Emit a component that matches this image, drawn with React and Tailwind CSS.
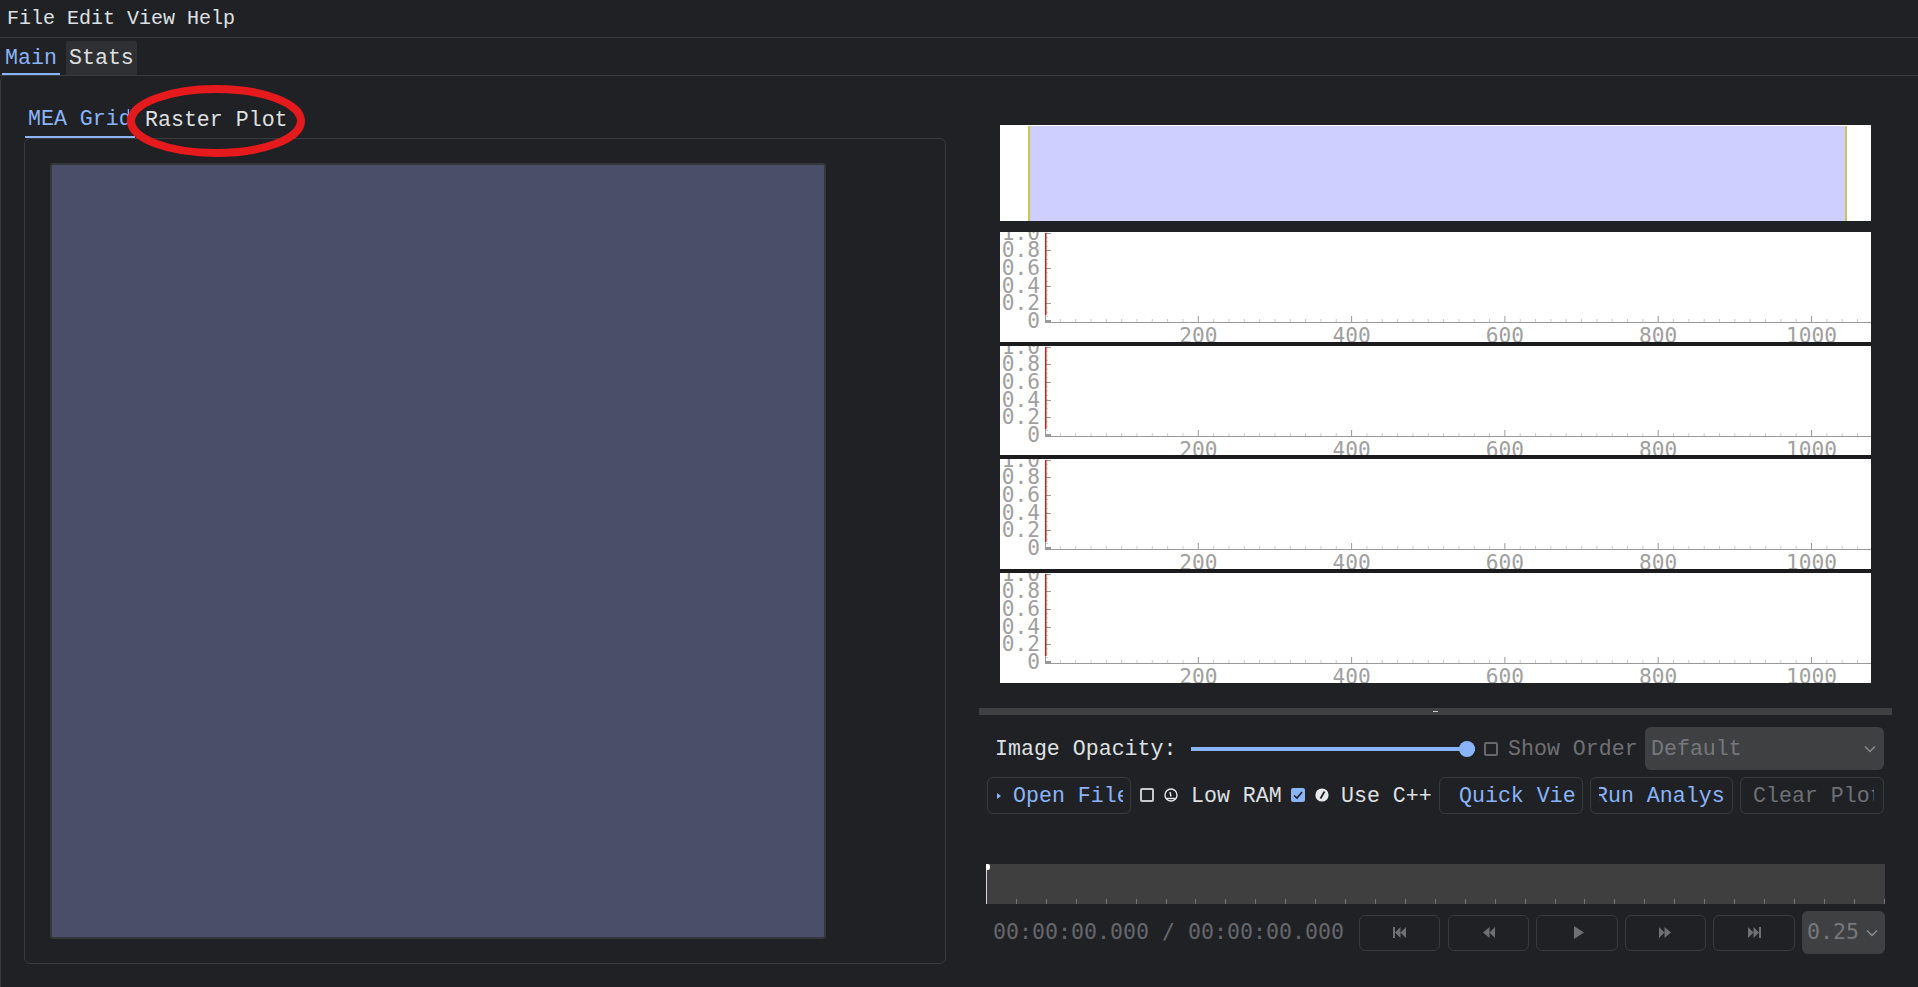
import React from 'react';

const mono = { fontFamily: '"Liberation Mono", monospace' };
const dejavu = { fontFamily: '"DejaVu Sans Mono", monospace' };
const xLabels = [200, 400, 600, 800, 1000];
const yLabels = [['1.0', 1], ['0.8', 18], ['0.6', 36], ['0.4', 54], ['0.2', 71], ['0', 89]];

const Plot = ({ h }) => {
  const minorX = [];
  for (let v = 20; v < 1080; v += 20) minorX.push(v);
  const minorY = [];
  for (let i = 0; i < 20; i++) minorY.push(1 + i * 4.4);
  return (
    <svg width="871" height={h} className="block bg-white shrink-0" style={dejavu}>
      {minorY.map((y) => (
        <line key={y} x1="45" x2="48" y1={y} y2={y} stroke="#cccccc" />
      ))}
      {yLabels.map(([t, y]) => (
        <g key={t}>
          <line x1="45" x2="51" y1={y + 0.5} y2={y + 0.5} stroke="#999999" />
          <text x="40" y={y + 7} textAnchor="end" fontSize="21.2" fill="#a0a0a0">{t}</text>
        </g>
      ))}
      <line x1="45.5" x2="45.5" y1="1" y2="90" stroke="#999999" />
      <rect x="45" y="1" width="1.5" height="82" fill="#e81010" />
      <rect x="45" y="88" width="6" height="3" fill="#999999" />
      <line x1="45" x2="871" y1="90.5" y2="90.5" stroke="#999999" />
      {minorX.map((v) => {
        const x = 45 + v * 0.7665;
        const major = v % 200 === 0;
        return (
          <line key={v} x1={x} x2={x} y1={major ? 84 : 87} y2="90" stroke={major ? '#999999' : '#cccccc'} />
        );
      })}
      {xLabels.map((v) => (
        <text key={v} x={45 + v * 0.7665} y="111" textAnchor="middle" fontSize="21.2" fill="#a0a0a0">{v}</text>
      ))}
    </svg>
  );
};

const Check = ({ on, dim }) => (
  <span
    className={
      'flex items-center justify-center w-[14px] h-[14px] rounded-[2px] border-2 shrink-0 ' +
      (on ? 'bg-[#8ab4f8] border-[#8ab4f8]' : dim ? 'border-[#66676b]' : 'border-[#c8c9cc]')
    }
  >
    {on && (
      <svg width="10" height="10" viewBox="0 0 10 10">
        <path d="M1 5.5 L4 8 L9 2" fill="none" stroke="#202125" strokeWidth="1.6" />
      </svg>
    )}
  </span>
);

const GaugeIcon = () => (
  <svg width="14" height="14" viewBox="0 0 14 14" className="shrink-0">
    <circle cx="7" cy="7" r="6" fill="none" stroke="#e8e9ea" strokeWidth="1.4" />
    <path d="M3 10.5 H11" stroke="#e8e9ea" strokeWidth="1.4" />
    <path d="M7 8.5 L6 4" stroke="#e8e9ea" strokeWidth="1.4" />
  </svg>
);

const DialIcon = () => (
  <svg width="14" height="14" viewBox="0 0 14 14" className="shrink-0">
    <circle cx="7" cy="7" r="6.6" fill="#e8e9ea" />
    <path d="M5.5 10.5 L9.5 3.5" stroke="#202125" strokeWidth="1.8" />
  </svg>
);

const Chevron = ({ color }) => (
  <svg width="12" height="8" viewBox="0 0 12 8">
    <path d="M1 1.5 L6 6.5 L11 1.5" fill="none" stroke={color} strokeWidth="1.5" />
  </svg>
);

const Btn = ({ w, className, children }) => (
  <div className={'flex items-center h-[37px] pt-[2px] rounded-md border border-[#3a3b3f] shrink-0 ' + w + ' ' + (className || '')}>
    {children}
  </div>
);

const icons = {
  first: 'M0 1 H2 V12 H0 Z M13 1 V12 L7.5 6.5 V12 L2 6.5 L7.5 1 V6.5 Z',
  back: 'M13 1 V12 L7.5 6.5 V12 L1 6.5 L7.5 1 V6.5 Z',
  play: 'M3 0 L13 6.5 L3 13 Z',
  fwd: 'M0 1 L5.5 6.5 V1 L12 6.5 L5.5 12 V6.5 L0 12 Z',
  last: 'M0 1 L5.5 6.5 V1 L11 6.5 V1 H13 V12 H11 V6.5 L5.5 12 V6.5 L0 12 Z',
};

const Transport = ({ d, w }) => (
  <div className={'flex items-center justify-center h-[36px] rounded-md border border-[#3a3b3f] shrink-0 ' + w}>
    <svg width="13" height="13" viewBox="0 0 13 13">
      <path d={d} fill="#6f7074" />
    </svg>
  </div>
);

const timelineTicks = [];
for (let i = 0; i <= 30; i++) timelineTicks.push(i);

export default function App() {
  return (
    <div className="relative w-[1918px] h-[987px] overflow-hidden bg-[#202125] text-[#dfe0e2] flex flex-col" style={mono}>
      {/* menu */}
      <div className="h-[38px] border-b border-[#3a3b3f] flex items-center gap-3 pl-[7px] text-[20px] shrink-0">
        <span>File</span>
        <span>Edit</span>
        <span>View</span>
        <span>Help</span>
      </div>

      {/* top tabs */}
      <div className="h-[38px] flex items-end pl-[2px] gap-[6px] text-[21.6px] shrink-0 border-b border-[#3a3b3f]">
        <div className="h-[35px] w-[58px] pl-[3px] pt-[3px] flex items-center text-[#8ab4f8] border-b-2 border-[#8ab4f8]">Main</div>
        <div className="h-[34px] w-[71px] pl-[3px] flex items-center bg-[#2f3033] rounded-t-[2px]">Stats</div>
      </div>

      {/* body */}
      <div className="flex flex-1 min-h-0 border-l border-[#3a3b3f] rounded-tl-md">
        {/* left side */}
        <div className="w-[978px] shrink-0 pl-[23px]">
          <div className="h-[62px] flex items-end text-[21.6px]">
            <div className="ml-px w-[110px] h-[37px] overflow-hidden pl-[3px] pt-[2px] flex items-center whitespace-nowrap text-[#8ab4f8] border-b-2 border-[#8ab4f8]">
              <span className="block w-[101px] overflow-hidden shrink-0">MEA Grid</span>
            </div>
            <div className="h-[37px] ml-[10px] pt-[2px] flex items-center whitespace-nowrap">Raster Plot</div>
          </div>
          <div className="w-[922px] h-[826px] border border-[#3a3b3f] rounded-md pl-[25px] pt-[24px]">
            <div className="w-[776px] h-[776px] bg-[#4b4e69] border-2 border-[#36373c] rounded-[3px]" />
          </div>
        </div>

        {/* right side */}
        <div className="w-[913px] shrink-0 flex flex-col">
          <div className="pl-[21px] pt-[49px] flex flex-col">
            <div className="w-[871px] h-[96px] bg-white pt-px pl-[28px] pr-[24px]">
              <div className="h-[95px] bg-[#ceceff] border-x-2 border-[#c8c850]" />
            </div>
            <div className="mt-[11px] flex flex-col gap-[4px] w-[871px] bg-[#1b1b1e]">
              <Plot h={110} />
              <Plot h={109} />
              <Plot h={110} />
              <Plot h={110} />
            </div>
          </div>

          {/* splitter */}
          <div className="mt-[25px] h-[7px] bg-[#3f4042] flex justify-center items-center shrink-0">
            <span className="w-[5px] h-px bg-[#c8c9cc]" />
          </div>

          {/* opacity row */}
          <div className="mt-[12px] h-[43px] flex items-center pl-[16px] text-[21.6px]">
            <span className="w-[196px] pt-[2px] shrink-0">Image Opacity:</span>
            <div className="relative w-[284px] h-[4px] bg-[#8ab4f8] shrink-0">
              <span className="absolute right-0 top-[-6px] w-[16px] h-[16px] rounded-full bg-[#8ab4f8]" />
            </div>
            <span className="ml-[9px]"><Check dim /></span>
            <span className="ml-[10px] pt-[2px] text-[#6f7074] w-[137px] shrink-0">Show Order</span>
            <div className="w-[239px] h-[43px] rounded-md bg-[#3f4042] flex items-center justify-between pl-[6px] pr-[8px] text-[#77787c] shrink-0">
              <span className="pt-[2px]">Default</span>
              <Chevron color="#8a8b8f" />
            </div>
          </div>

          {/* buttons row */}
          <div className="mt-[7px] flex items-center pl-[8px] text-[21.6px]">
            <Btn w="w-[144px]" className="pl-[9px]">
              <div className="w-[126px] overflow-hidden whitespace-nowrap flex items-center text-[#8ab4f8]">
                <svg width="5" height="8" viewBox="0 0 5 8" className="shrink-0 mr-[11px]">
                  <path d="M0 1 L4 4 L0 7 Z" fill="#8ab4f8" />
                </svg>
                <span>Open File</span>
              </div>
            </Btn>
            <span className="ml-[9px] mt-[-2px]"><Check /></span>
            <span className="ml-[10px] mt-[-2px]"><GaugeIcon /></span>
            <span className="ml-[13px] pt-[2px] w-[100px] shrink-0">Low RAM</span>
            <span className="mt-[-2px]"><Check on /></span>
            <span className="ml-[10px] mt-[-2px]"><DialIcon /></span>
            <span className="ml-[12px] pt-[2px] w-[98px] shrink-0">Use C++</span>
            <Btn w="w-[144px]" className="pl-[19px]">
              <div className="w-[117px] overflow-hidden whitespace-nowrap text-[#8ab4f8]">Quick View</div>
            </Btn>
            <Btn w="w-[143px]" className="ml-[7px] pl-[8px]">
              <div className="w-[126px] overflow-hidden whitespace-nowrap text-[#8ab4f8]">
                <span className="block ml-[-4px]">Run Analysis</span>
              </div>
            </Btn>
            <Btn w="w-[144px]" className="ml-[7px] pl-[12px]">
              <div className="w-[121px] overflow-hidden whitespace-nowrap text-[#6f7074]">Clear Plot</div>
            </Btn>
          </div>

          {/* timeline */}
          <div className="relative mt-[50px] ml-[7px] w-[899px] h-[40px] bg-[#3f3f3f] flex justify-between items-end shrink-0">
            {timelineTicks.map((i) => (
              <span key={i} className="w-px h-[5px] bg-[#747474] first:opacity-0" />
            ))}
            <span className="absolute left-0 top-0 w-px h-[40px] bg-[#d8d8d8]" />
            <span className="absolute left-0 top-0 w-[4px] h-[6px] bg-white rounded-r-[2px]" />
          </div>

          {/* transport */}
          <div className="mt-[7px] flex items-center pl-[14px] text-[21.6px]">
            <span className="w-[366px] shrink-0 whitespace-nowrap text-[#66676b]" style={dejavu}>00:00:00.000 / 00:00:00.000</span>
            <div className="flex items-center gap-[7px]">
              <Transport d={icons.first} w="w-[81px] mr-px" />
              <Transport d={icons.back} w="w-[81px]" />
              <Transport d={icons.play} w="w-[82px]" />
              <Transport d={icons.fwd} w="w-[81px]" />
              <Transport d={icons.last} w="w-[82px]" />
              <div className="w-[83px] h-[43px] rounded-md bg-[#3f4042] flex items-center justify-between pl-[5px] pr-[7px] text-[#77787c] shrink-0">
                <span style={dejavu}>0.25</span>
                <Chevron color="#8a8b8f" />
              </div>
            </div>
          </div>
        </div>
      </div>

      {/* hand drawn annotation */}
      <svg className="absolute left-[124px] top-[81px]" width="184" height="80" viewBox="0 0 184 80">
        <ellipse cx="92" cy="40" rx="85" ry="32" fill="none" stroke="#e41a1c" strokeWidth="8" />
      </svg>
    </div>
  );
}
